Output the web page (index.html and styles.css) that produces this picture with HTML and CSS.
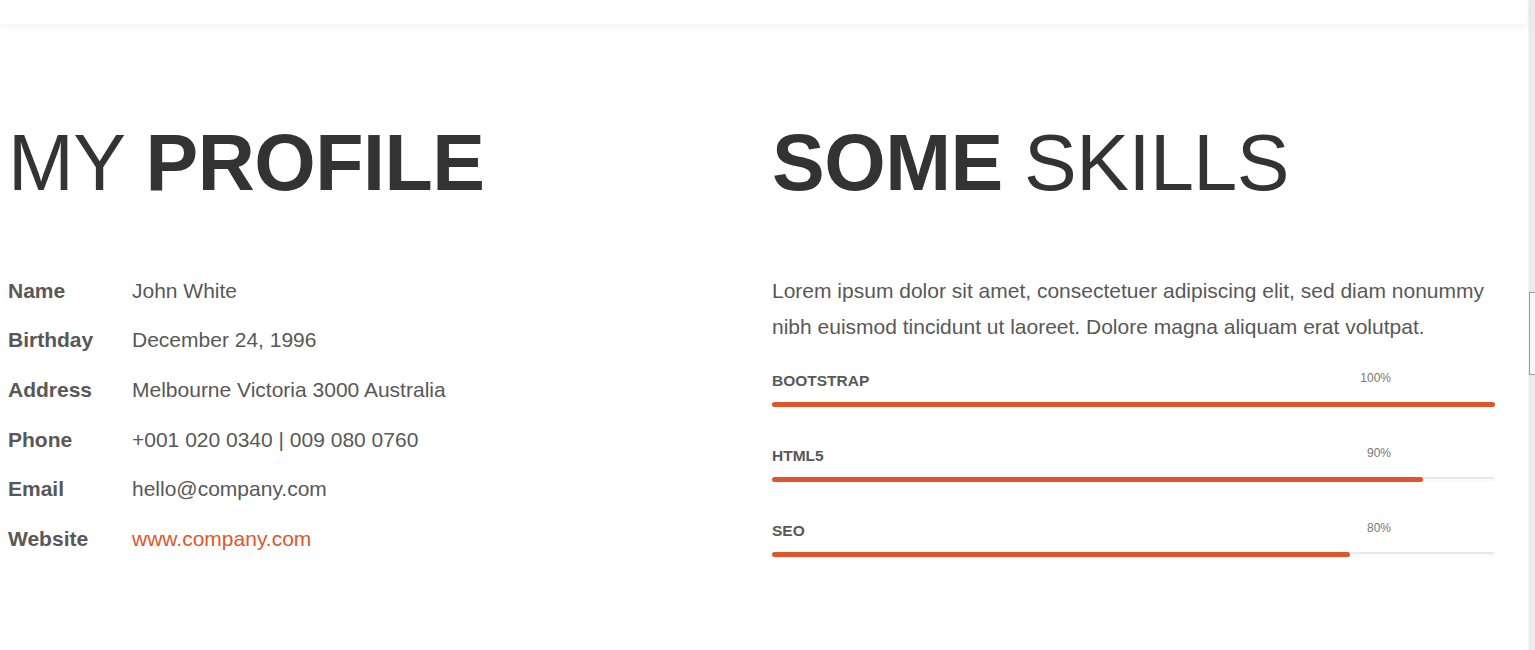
FILE: index.html
```html
<!DOCTYPE html>
<html lang="en">
<head>
<meta charset="utf-8">
<title>Profile</title>
<link rel="stylesheet" href="styles.css">
</head>
<body>
<div class="page">
  <main class="main">
    <header class="topbar"></header>
    <section class="about">
      <div class="col">
        <h2 class="title">MY <b>PROFILE</b></h2>
        <dl class="info">
          <div class="row"><dt>Name</dt><dd>John White</dd></div>
          <div class="row"><dt>Birthday</dt><dd>December 24, 1996</dd></div>
          <div class="row"><dt>Address</dt><dd>Melbourne Victoria 3000 Australia</dd></div>
          <div class="row"><dt>Phone</dt><dd>+001 020 0340 | 009 080 0760</dd></div>
          <div class="row"><dt>Email</dt><dd>hello@company.com</dd></div>
          <div class="row"><dt>Website</dt><dd><a href="#" class="link">www.company.com</a></dd></div>
        </dl>
      </div>
      <div class="col">
        <h2 class="title"><b>SOME</b> SKILLS</h2>
        <p class="intro">Lorem ipsum dolor sit amet, consectetuer adipiscing elit, sed diam nonummy nibh euismod tincidunt ut laoreet. Dolore magna aliquam erat volutpat.</p>
        <div class="skills">
          <div class="skill">
            <div class="skill-head"><span class="skill-name">BOOTSTRAP</span><span class="skill-pct">100%</span></div>
            <div class="track"><div class="fill" style="width:100%"></div></div>
          </div>
          <div class="skill">
            <div class="skill-head"><span class="skill-name">HTML5</span><span class="skill-pct">90%</span></div>
            <div class="track"><div class="fill" style="width:90%"></div></div>
          </div>
          <div class="skill">
            <div class="skill-head"><span class="skill-name">SEO</span><span class="skill-pct">80%</span></div>
            <div class="track"><div class="fill" style="width:80%"></div></div>
          </div>
        </div>
      </div>
    </section>
  </main>
  <div class="scrollbar"><div class="thumb"></div></div>
</div>
</body>
</html>
```

FILE: styles.css
```css
* { box-sizing: border-box; }
html, body { margin: 0; padding: 0; background: #fff; }
body {
  font-family: "Liberation Sans", Arial, sans-serif;
  color: #585858;
  overflow: hidden;
}
.page {
  display: flex;
  height: 650px;
}
.main {
  flex: 1;
  min-width: 0;
}
.topbar {
  height: 24px;
  background: #fff;
  box-shadow: 0 2px 10px rgba(0, 0, 0, 0.06);
  position: relative;
  z-index: 1;
}
.about {
  display: grid;
  grid-template-columns: 723px 723px;
  column-gap: 41px;
  padding: 96px 0 0 8px;
}
.title {
  margin: 0;
  font-size: 79px;
  line-height: 1.1;
  font-weight: normal;
  color: #333;
  letter-spacing: -0.5px;
}
.title b { font-weight: bold; }
.info {
  margin: 59px 0 0;
}
.row {
  display: flex;
  font-size: 21px;
  line-height: 49.6px;
}
.row dt {
  width: 124px;
  font-weight: bold;
  color: #585858;
}
.row dd {
  margin: 0;
  color: #585858;
}
.link {
  color: #e2552b;
  text-decoration: none;
}
.intro {
  margin: 66px 0 0;
  font-size: 21px;
  line-height: 36px;
  color: #585858;
}
.skills {
  margin-top: 26px;
}
.skill {
  margin-bottom: 39px;
}
.skill-head {
  display: flex;
  justify-content: space-between;
  align-items: flex-start;
  height: 20px;
}
.skill-name {
  font-size: 15.5px;
  line-height: 20px;
  font-weight: bold;
  color: #585858;
}
.skill-pct {
  font-size: 12px;
  line-height: 15px;
  color: #777;
  margin-right: 104px;
}
.track {
  margin-top: 11px;
  height: 5px;
  border-radius: 3px;
  background: linear-gradient(#e9e9e9 0, #e9e9e9 2px, #fbfbfb 2px);
}
.fill {
  height: 5px;
  border-radius: 3px;
  background: #e2552b;
}
.scrollbar {
  width: 7px;
  margin-left: 1px;
  background: #ebebeb;
  border-left: 1px solid #f4f4f4;
}
.thumb {
  margin-top: 292px;
  height: 83px;
  border: 1px solid #9a9a9a;
  border-right: none;
  background: #f6f6f6;
}
```
